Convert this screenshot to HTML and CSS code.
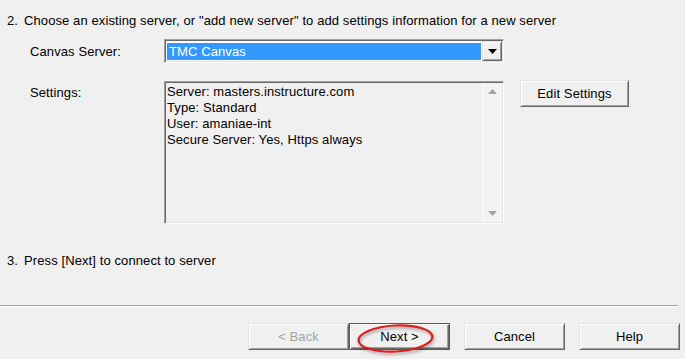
FILE: index.html
```html
<!DOCTYPE html>
<html lang="en">

<head>
    <meta charset="UTF-8">
    <title>Connect to Server</title>
    <link rel="stylesheet" href="styles.css">
</head>

<body>

    <div class="wizard">

        <p class="step first"><span class="num">2.</span>Choose an existing server, or "add new server" to add settings information for a new server</p>

        <div class="fields">
            <label class="labl" for="server">Canvas Server:</label>
            <div class="combo sunken" id="server">
                <div class="combo-value">TMC Canvas</div>
                <div class="combo-btn raised">
                    <svg width="9" height="5" viewBox="0 0 9 5"><polygon points="0,0 9,0 4.5,5" fill="#000"/></svg>
                </div>
            </div>
            <div></div>

            <label class="labl" for="settings">Settings:</label>
            <div class="settings sunken" id="settings">
                <div class="settings-text">
                    <div>Server: masters.instructure.com</div>
                    <div>Type: Standard</div>
                    <div>User: amaniae-int</div>
                    <div>Secure Server: Yes, Https always</div>
                </div>
                <div class="scrollbar">
                    <div class="arrow">
                        <svg width="9" height="5" viewBox="0 0 9 5"><polygon points="4.5,0 9,5 0,5" fill="#a3a3a3"/></svg>
                    </div>
                    <div class="arrow">
                        <svg width="9" height="5" viewBox="0 0 9 5"><polygon points="0,0 9,0 4.5,5" fill="#a3a3a3"/></svg>
                    </div>
                </div>
            </div>
            <button class="btn edit">Edit Settings</button>
        </div>

        <p class="step third"><span class="num">3.</span>Press [Next] to connect to server</p>

        <hr class="sep">

        <div class="actions">
            <div class="pair">
                <button class="btn" disabled>&lt; Back</button>
                <div class="next-wrap">
                    <button class="btn default">Next &gt;</button>
                    <!-- red mark drawn over the Next button -->
                    <svg class="mark" width="79" height="31" viewBox="0 0 79 31">
                        <ellipse cx="39.5" cy="15.5" rx="37" ry="13" transform="rotate(-3 39.5 15.5)" fill="none" stroke="#e11d1d" stroke-width="2.2"/>
                    </svg>
                </div>
            </div>
            <button class="btn">Cancel</button>
            <button class="btn">Help</button>
        </div>

    </div>

</body>

</html>
```

FILE: styles.css
```css
body {
    background-color: #f0f0f0;
    margin: 0;
    width: 685px;
    height: 359px;
    overflow: hidden;
    font-family: 'Liberation Sans', Arial, sans-serif;
    font-size: 13px;
    line-height: 16px;
    letter-spacing: 0.1px;
    color: #000;
}

.step {
    margin: 0;
    padding-left: 7px;
}

.first {
    padding-top: 13px;
}

.third {
    margin-top: 29px;
}

.num {
    display: inline-block;
    width: 17px;
}

.fields {
    display: grid;
    grid-template-columns: 134px 340px auto;
    grid-template-rows: 24px auto;
    row-gap: 17px;
    align-items: start;
    margin: 10px 0 0 30px;
}

.labl {
    padding-top: 5px;
}

/* sunken and raised windows bevels */
.sunken {
    box-sizing: border-box;
    border: 1px solid;
    border-color: #a0a0a0 #fff #fff #a0a0a0;
    box-shadow: inset 1px 1px #696969, inset -1px -1px #e3e3e3;
    padding: 1px;
}

.raised {
    box-sizing: border-box;
    border: 1px solid;
    border-color: #e3e3e3 #696969 #696969 #e3e3e3;
    box-shadow: inset 1px 1px #fff, inset -1px -1px #a0a0a0;
    background-color: #f0f0f0;
}

.combo {
    display: flex;
    height: 24px;
    background-color: #fff;
}

.combo-value {
    flex: 1;
    height: 17px;
    margin: 2px 1px 1px 1px;
    padding-left: 2px;
    background-color: #3399ff;
    color: #fff;
    line-height: 17px;
}

.combo-btn {
    width: 20px;
    height: 20px;
    display: flex;
    align-items: center;
    justify-content: center;
}

.settings {
    display: flex;
    height: 143px;
    margin-top: 1px;
    background-color: #f0f0f0;
}

.settings-text {
    flex: 1;
    padding: 1px 0 0 1px;
}

.scrollbar {
    width: 19px;
    display: flex;
    flex-direction: column;
    justify-content: space-between;
    background-color: #f4f4f4;
    border-left: 1px solid #fbfbfb;
}

.arrow {
    height: 17px;
    display: flex;
    align-items: center;
    justify-content: center;
}

.btn {
    box-sizing: border-box;
    width: 101px;
    height: 27px;
    padding: 0;
    margin: 0;
    font-family: 'Liberation Sans', Arial, sans-serif;
    font-size: 13px;
    letter-spacing: 0.1px;
    color: #000;
    background-color: #f0f0f0;
    border: 1px solid;
    border-color: #e3e3e3 #696969 #696969 #e3e3e3;
    box-shadow: inset 1px 1px #fff, inset -1px -1px #a0a0a0;
    border-radius: 0;
}

.btn:disabled {
    color: #a3a3a3;
}

.btn.default {
    border-color: #5a5a5a;
    box-shadow: inset 1px 1px #fff, inset -1px -1px #696969, inset -2px -2px #a0a0a0;
}

.edit {
    width: 109px;
    margin-left: 16px;
}

.sep {
    margin: 36px 7px 0 0;
    height: 0;
    border: none;
    border-top: 1px solid #a0a0a0;
    border-bottom: 1px solid #fff;
}

.actions {
    display: flex;
    justify-content: flex-end;
    gap: 14px;
    margin-top: 16px;
    padding-right: 5px;
}

.pair {
    display: flex;
}

.next-wrap {
    position: relative;
}

.mark {
    position: absolute;
    left: 7px;
    top: 0;
    pointer-events: none;
    filter: drop-shadow(1px 2px 1.5px rgba(0, 0, 0, 0.35));
}
```
